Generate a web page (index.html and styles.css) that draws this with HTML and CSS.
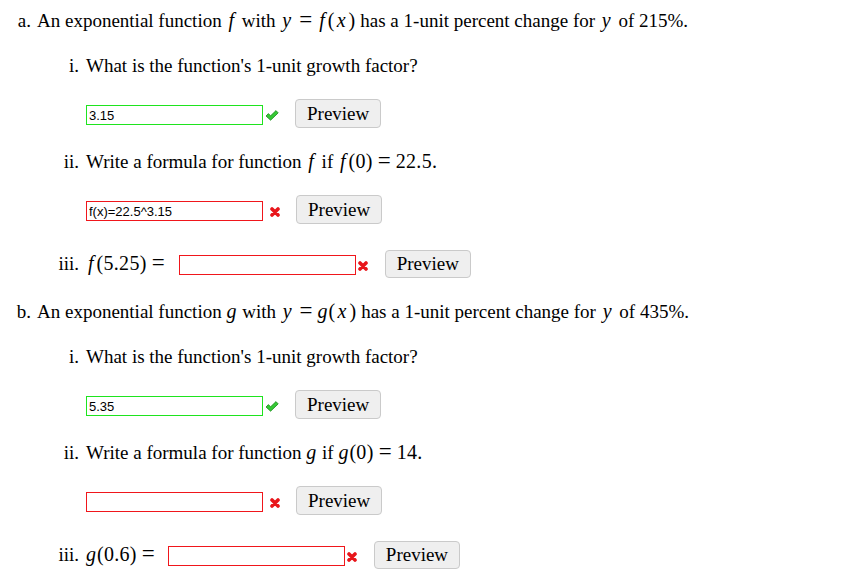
FILE: index.html
```html
<!DOCTYPE html>
<html lang="en">
<head>
  <meta charset="UTF-8">
  <title>Exponential functions</title>
  <meta name="viewport" content="width=device-width, initial-scale=1.0">
  <link rel="stylesheet" href="styles.css">
</head>
<body>

  <ol class="parts">

    <!-- PART A -->
    <li>
      <div class="part-body">
        <p class="stem">An exponential function <span class="mi">f</span> with <span class="mi">y</span><span class="mo">=</span><span class="mi">f</span><span class="mn">(</span><span class="mi">x</span><span class="mn">)</span> has a 1-unit percent change for <span class="mi">y</span> of 215%.</p>

        <ol class="subs">
          <li>
            <div class="sub-body">
              <p class="prompt">What is the function's 1-unit growth factor?</p>
              <div class="answer">
                <input class="ans ok" type="text" value="3.15">
                <svg class="mark check" viewBox="0 0 14 11" width="14" height="11"><path d="M1 6 L3.4 3.6 L5.6 5.8 L11 0.6 L13.2 2.9 L5.6 10.2 Z" fill="#35c935" stroke="#1c8a1c" stroke-width="0.8" stroke-linejoin="round"/></svg>
                <button>Preview</button>
              </div>
            </div>
          </li>
          <li>
            <div class="sub-body">
              <p class="prompt tall">Write a formula for function <span class="mi">f</span> if <span class="mi">f</span><span class="mn">(0)</span><span class="mo">=</span><span class="mn">22.5.</span></p>
              <div class="answer">
                <input class="ans bad" type="text" value="f(x)=22.5^3.15">
                <svg class="mark cross spaced" viewBox="0 0 10 10" width="10" height="10"><path d="M2 2 L8 8 M8 2 L2 8" stroke="#e8161b" stroke-width="3.6" stroke-linecap="round"/></svg>
                <button>Preview</button>
              </div>
            </div>
          </li>
          <li>
            <div class="sub-body inline">
              <span class="lead"><span class="mi">f</span><span class="mn">(5.25)</span><span class="mo">=</span></span>
              <input class="ans bad" type="text" value="">
              <svg class="mark cross" viewBox="0 0 10 10" width="10" height="10"><path d="M2 2 L8 8 M8 2 L2 8" stroke="#e8161b" stroke-width="3.6" stroke-linecap="round"/></svg>
              <button>Preview</button>
            </div>
          </li>
        </ol>
      </div>
    </li>

    <!-- PART B -->
    <li>
      <div class="part-body">
        <p class="stem">An exponential function <span class="mi g">g</span> with <span class="mi">y</span><span class="mo">=</span><span class="mi g">g</span><span class="mn">(</span><span class="mi">x</span><span class="mn">)</span> has a 1-unit percent change for <span class="mi">y</span> of 435%.</p>

        <ol class="subs">
          <li>
            <div class="sub-body">
              <p class="prompt">What is the function's 1-unit growth factor?</p>
              <div class="answer">
                <input class="ans ok" type="text" value="5.35">
                <svg class="mark check" viewBox="0 0 14 11" width="14" height="11"><path d="M1 6 L3.4 3.6 L5.6 5.8 L11 0.6 L13.2 2.9 L5.6 10.2 Z" fill="#35c935" stroke="#1c8a1c" stroke-width="0.8" stroke-linejoin="round"/></svg>
                <button>Preview</button>
              </div>
            </div>
          </li>
          <li>
            <div class="sub-body">
              <p class="prompt tall">Write a formula for function <span class="mi g">g</span> if <span class="mi g">g</span><span class="mn">(0)</span><span class="mo">=</span><span class="mn">14.</span></p>
              <div class="answer">
                <input class="ans bad" type="text" value="">
                <svg class="mark cross spaced" viewBox="0 0 10 10" width="10" height="10"><path d="M2 2 L8 8 M8 2 L2 8" stroke="#e8161b" stroke-width="3.6" stroke-linecap="round"/></svg>
                <button>Preview</button>
              </div>
            </div>
          </li>
          <li>
            <div class="sub-body inline">
              <span class="lead short"><span class="mi g">g</span><span class="mn">(0.6)</span><span class="mo">=</span></span>
              <input class="ans bad" type="text" value="">
              <svg class="mark cross" viewBox="0 0 10 10" width="10" height="10"><path d="M2 2 L8 8 M8 2 L2 8" stroke="#e8161b" stroke-width="3.6" stroke-linecap="round"/></svg>
              <button>Preview</button>
            </div>
          </li>
        </ol>
      </div>
    </li>

  </ol>

</body>
</html>
```

FILE: styles.css
```css
* {
  box-sizing: border-box;
  margin: 0;
  padding: 0;
}

body {
  font-family: "Liberation Serif", "Times New Roman", serif;
  font-size: 19px;
  line-height: 22px;
  color: #000;
  background: #fff;
  padding-top: 10px;
}

/* outer list: a., b. */
.parts {
  list-style: none;
  counter-reset: part;
}

.parts > li {
  counter-increment: part;
  display: grid;
  grid-template-columns: 31px 1fr;
  column-gap: 6px;
  align-items: baseline;
  margin-bottom: 23px;
}

.parts > li::before {
  content: counter(part, lower-alpha) ".";
  text-align: right;
}

/* inner list: i., ii., iii. */
.subs {
  list-style: none;
  counter-reset: sub;
}

.subs > li {
  counter-increment: sub;
  display: grid;
  grid-template-columns: 42px 1fr;
  column-gap: 7px;
  align-items: baseline;
  margin-top: 23px;
}

.subs > li:last-child {
  margin-top: 25px;
}

.subs > li::before {
  content: counter(sub, lower-roman) ".";
  text-align: right;
}

.prompt.tall {
  margin-bottom: 2px;
}

.answer {
  display: flex;
  align-items: center;
  height: 29px;
  margin-top: 22px;
}

.inline {
  display: flex;
  align-items: center;
  height: 29px;
}

.lead {
  margin-right: 9px;
}

.lead.short {
  margin-right: 8px;
}

/* math bits */
.mi {
  font-style: italic;
  font-size: 20px;
  line-height: 16px;
  padding: 0 3px 0 2px;
}

.mi.g {
  padding: 0 1px 0 0;
}

.mn {
  font-size: 20px;
  line-height: 16px;
  letter-spacing: 0.3px;
}

.mo {
  font-size: 23px;
  line-height: 16px;
  margin: 0 5px;
}

.ans {
  width: 177px;
  height: 20px;
  margin-top: 3px;
  padding: 0 2px;
  font-family: "Liberation Sans", Arial, sans-serif;
  font-size: 13px;
  color: #000;
  background: #fff;
  outline: none;
}

.ans.ok {
  border: 1px solid #1ee41e;
}

.ans.bad {
  border: 1px solid #f0161b;
}

.mark {
  flex: none;
  margin-left: 2px;
}

.mark.check {
  margin-top: 3px;
}

.mark.cross {
  margin-top: 4px;
}

.mark.spaced {
  margin-left: 7px;
}

.answer button,
.inline button {
  height: 29px;
  margin-left: 16px;
  padding: 0 11px;
  font-family: "Liberation Serif", "Times New Roman", serif;
  font-size: 19px;
  color: #000;
  background: #efefef;
  border: 1px solid #cacaca;
  border-radius: 4px;
}

.inline button {
  height: 28px;
  margin-left: 17px;
}
```
